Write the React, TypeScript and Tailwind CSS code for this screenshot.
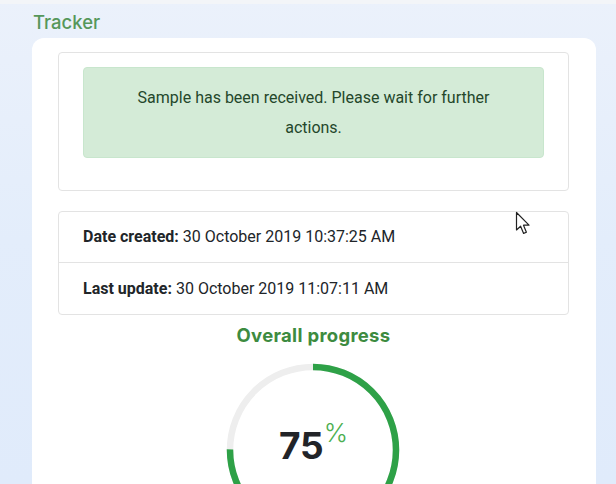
import React from "react";

const ROWS = [
  { label: "Date created:", value: "30 October 2019 10:37:25 AM" },
  { label: "Last update:", value: "30 October 2019 11:07:11 AM" },
];

function ProgressRing({ value }: { value: number }) {
  const r = 83;
  const c = 2 * Math.PI * r;
  return (
    <div className="relative h-[174px] w-[174px]">
      <svg width="174" height="174" viewBox="0 0 174 174" className="block">
        <circle cx="87" cy="87" r={r} fill="none" stroke="#eeeeee" strokeWidth="6.5" />
        <circle
          cx="87"
          cy="87"
          r={r}
          fill="none"
          stroke="#2ea147"
          strokeWidth="6.5"
          strokeDasharray={`${(c * value) / 100} ${c}`}
          transform="rotate(-90 87 87)"
        />
      </svg>
      <div className="absolute inset-0 flex items-start justify-center pt-[60px] pl-[1px]">
        <span className="font-['Inter',sans-serif] text-[37px] font-bold leading-[46px] text-[#222428]">
          {value}
        </span>
        <span className="-mt-[6px] font-['Inter',sans-serif] text-[26px] font-light leading-[32px] text-[#4caf50]">
          %
        </span>
      </div>
    </div>
  );
}

function Cursor() {
  return (
    <svg
      className="absolute left-[515px] top-[211px]"
      width="18"
      height="26"
      viewBox="0 0 18 26"
    >
      <path
        d="M1.5 1.5 L1.5 19 L5.6 15.2 L8.6 22.4 L11.4 21.2 L8.5 14.2 L14 14.2 Z"
        fill="#ffffff"
        stroke="#222222"
        strokeWidth="1.2"
        strokeLinejoin="round"
      />
    </svg>
  );
}

export default function App() {
  return (
    <div className="relative h-[484px] w-[616px] overflow-hidden bg-gradient-to-b from-[#ebf1fb] via-[#e3edfb] to-[#e0ebfb] font-['Roboto',sans-serif]">
      <div className="h-[4px] bg-[#f3f5f8]" />
      <div className="h-[34px] pl-[33px] pt-[6px] font-['Inter',sans-serif] text-[18.5px] font-medium leading-[24px] text-[#56975a]">
        Tracker
      </div>

      <div className="ml-[32px] w-[564px] rounded-t-[12px] bg-white px-[26px] pt-[14px] pb-6">
        {/* status */}
        <div className="w-[511px] rounded-[4px] border border-[#e3e3e3] px-6 pt-[14px] pb-[32px]">
          <div className="flex h-[91px] items-center justify-center rounded-[4px] border border-[#c8e6cd] bg-[#d4ebd7] px-[40px] text-center text-[16px] leading-[30px] text-[#24472b]">
            Sample has been received. Please wait for further actions.
          </div>
        </div>

        {/* dates */}
        <div className="mt-[20px] w-[511px] rounded-[4px] border border-[#e3e3e3]">
          {ROWS.map((row, i) => (
            <div
              key={row.label}
              className={
                "flex h-[51px] items-center px-6 text-[16px] text-[#212529] " +
                (i === 0 ? "border-b border-[#e3e3e3]" : "")
              }
            >
              <span className="font-bold">{row.label}</span>
              <span className="ml-1">{row.value}</span>
            </div>
          ))}
        </div>

        {/* progress */}
        <div className="flex w-[511px] flex-col items-center">
          <div className="mt-[7px] font-['Inter',sans-serif] text-[18.5px] font-bold leading-[26px] tracking-[0.3px] text-[#3d8b40]">
            Overall progress
          </div>
          <div className="mt-[15px] -ml-[1px]">
            <ProgressRing value={75} />
          </div>
        </div>
      </div>

      <Cursor />
    </div>
  );
}
